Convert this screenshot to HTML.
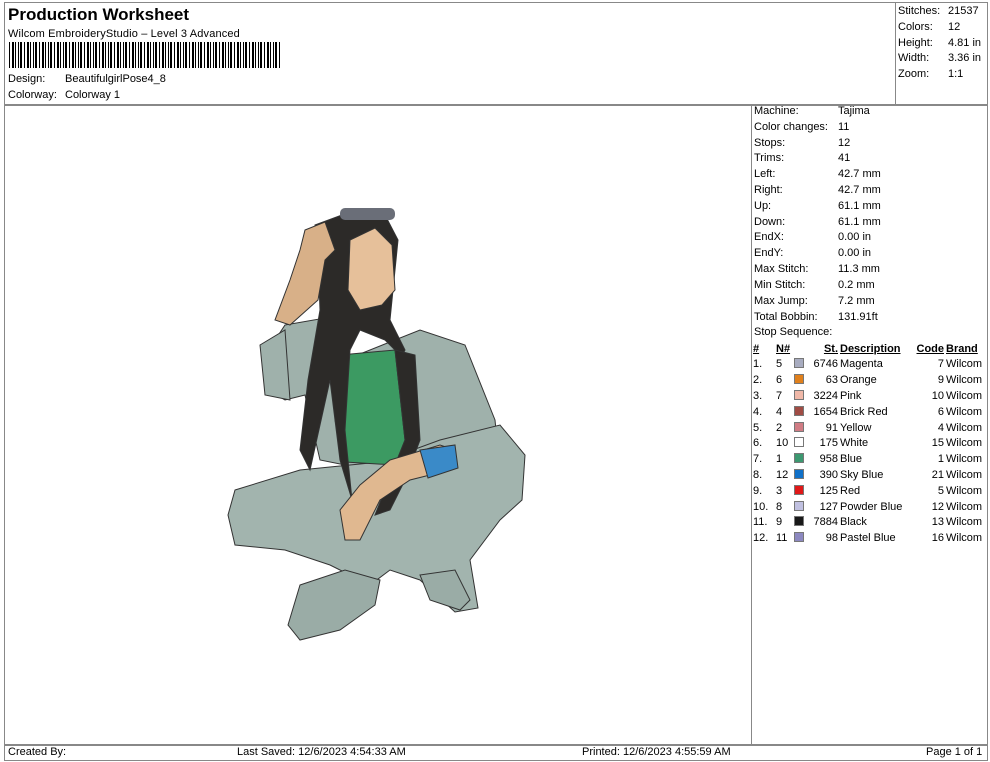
<!DOCTYPE html>
<html><head><meta charset="utf-8"><style>
*{margin:0;padding:0;box-sizing:border-box}
body{width:990px;height:762px;background:#fff;font-family:"Liberation Sans",Arial,sans-serif;font-size:11px;color:#000;position:relative;overflow:hidden}
.a{position:absolute;white-space:nowrap}
.ln{position:absolute;background:#888}
.t{position:absolute;left:754px;font-size:11px;white-space:nowrap;width:230px}
.t span{position:absolute;left:84px;white-space:nowrap}
table{position:absolute;left:752px;top:341px;border-collapse:collapse;font-size:11px;white-space:nowrap}
td{height:15.8px;padding:0 1px;line-height:15px}
th{font-weight:bold;text-decoration:underline;text-align:left;height:16px;padding:0 1px}
.r{text-align:right}
.sw{display:inline-block;width:10px;height:10px;border:1px solid #777;vertical-align:-1px}
</style></head><body>
<div class="ln" style="left:4px;top:2px;width:984px;height:1px"></div>
<div class="ln" style="left:4px;top:2px;width:1px;height:758px"></div>
<div class="ln" style="left:987px;top:2px;width:1px;height:758px"></div>
<div class="ln" style="left:895px;top:2px;width:1px;height:102px"></div>
<div class="ln" style="left:4px;top:104px;width:984px;height:2px"></div>
<div class="ln" style="left:751px;top:104px;width:1px;height:640px"></div>
<div class="ln" style="left:4px;top:744px;width:984px;height:2px"></div>
<div class="ln" style="left:4px;top:760px;width:984px;height:1px"></div>

<div class="a" style="left:8px;top:5px;font-size:17px;font-weight:bold">Production Worksheet</div>
<div class="a" style="left:8px;top:28px;letter-spacing:0.15px">Wilcom EmbroideryStudio – Level 3 Advanced</div>
<div class="a" style="left:9px;top:42px;width:273px;height:26px;background:repeating-linear-gradient(90deg,#000 0 1px,#fff 1px 3px,#000 3px 5px,#fff 5px 6px,#000 6px 7px,#fff 7px 9px,#000 9px 10px,#fff 10px 11px,#000 11px 13px,#fff 13px 15px)"></div>
<div class="a" style="left:8px;top:73px">Design:</div><div class="a" style="left:65px;top:73px">BeautifulgirlPose4_8</div>
<div class="a" style="left:8px;top:89px">Colorway:</div><div class="a" style="left:65px;top:89px">Colorway 1</div>

<div class="a" style="left:898px;top:5px">Stitches:</div><div class="a" style="left:948px;top:5px">21537</div>
<div class="a" style="left:898px;top:21px">Colors:</div><div class="a" style="left:948px;top:21px">12</div>
<div class="a" style="left:898px;top:37px">Height:</div><div class="a" style="left:948px;top:37px">4.81 in</div>
<div class="a" style="left:898px;top:52px">Width:</div><div class="a" style="left:948px;top:52px">3.36 in</div>
<div class="a" style="left:898px;top:68px">Zoom:</div><div class="a" style="left:948px;top:68px">1:1</div>

<div class="t" style="top:105px">Machine:<span>Tajima</span></div>
<div class="t" style="top:121px">Color changes:<span>11</span></div>
<div class="t" style="top:137px">Stops:<span>12</span></div>
<div class="t" style="top:152px">Trims:<span>41</span></div>
<div class="t" style="top:168px">Left:<span>42.7 mm</span></div>
<div class="t" style="top:184px">Right:<span>42.7 mm</span></div>
<div class="t" style="top:200px">Up:<span>61.1 mm</span></div>
<div class="t" style="top:216px">Down:<span>61.1 mm</span></div>
<div class="t" style="top:231px">EndX:<span>0.00 in</span></div>
<div class="t" style="top:247px">EndY:<span>0.00 in</span></div>
<div class="t" style="top:263px">Max Stitch:<span>11.3 mm</span></div>
<div class="t" style="top:279px">Min Stitch:<span>0.2 mm</span></div>
<div class="t" style="top:295px">Max Jump:<span>7.2 mm</span></div>
<div class="t" style="top:311px">Total Bobbin:<span>131.91ft</span></div>
<div class="t" style="top:326px">Stop Sequence:</div>

<table>
<tr><th style="width:23px">#</th><th style="width:18px">N#</th><th style="width:14px"></th><th style="width:32px;text-align:right">St.</th><th style="width:72px">Description</th><th style="width:34px;text-align:right">Code</th><th>Brand</th></tr>
<tr><td>1.</td><td>5</td><td><i class="sw" style="background:#a8acc0"></i></td><td class="r">6746</td><td>Magenta</td><td class="r">7</td><td>Wilcom</td></tr>
<tr><td>2.</td><td>6</td><td><i class="sw" style="background:#e0801c"></i></td><td class="r">63</td><td>Orange</td><td class="r">9</td><td>Wilcom</td></tr>
<tr><td>3.</td><td>7</td><td><i class="sw" style="background:#f0b8a8"></i></td><td class="r">3224</td><td>Pink</td><td class="r">10</td><td>Wilcom</td></tr>
<tr><td>4.</td><td>4</td><td><i class="sw" style="background:#a04c44"></i></td><td class="r">1654</td><td>Brick Red</td><td class="r">6</td><td>Wilcom</td></tr>
<tr><td>5.</td><td>2</td><td><i class="sw" style="background:#d07c84"></i></td><td class="r">91</td><td>Yellow</td><td class="r">4</td><td>Wilcom</td></tr>
<tr><td>6.</td><td>10</td><td><i class="sw" style="background:#fff"></i></td><td class="r">175</td><td>White</td><td class="r">15</td><td>Wilcom</td></tr>
<tr><td>7.</td><td>1</td><td><i class="sw" style="background:#3c9870"></i></td><td class="r">958</td><td>Blue</td><td class="r">1</td><td>Wilcom</td></tr>
<tr><td>8.</td><td>12</td><td><i class="sw" style="background:#1070c8"></i></td><td class="r">390</td><td>Sky Blue</td><td class="r">21</td><td>Wilcom</td></tr>
<tr><td>9.</td><td>3</td><td><i class="sw" style="background:#e01818"></i></td><td class="r">125</td><td>Red</td><td class="r">5</td><td>Wilcom</td></tr>
<tr><td>10.</td><td>8</td><td><i class="sw" style="background:#c0c0e0"></i></td><td class="r">127</td><td>Powder Blue</td><td class="r">12</td><td>Wilcom</td></tr>
<tr><td>11.</td><td>9</td><td><i class="sw" style="background:#181818"></i></td><td class="r">7884</td><td>Black</td><td class="r">13</td><td>Wilcom</td></tr>
<tr><td>12.</td><td>11</td><td><i class="sw" style="background:#8c88c0"></i></td><td class="r">98</td><td>Pastel Blue</td><td class="r">16</td><td>Wilcom</td></tr>
</table>

<svg class="a" style="left:0;top:0" width="750" height="744" viewBox="0 0 750 744">
<g stroke="#333" stroke-width="1">
<path d="M285 325 L325 318 L345 360 L420 330 L465 345 L495 420 L500 470 L430 480 L370 470 L320 460 L305 395 L285 400 L268 390 L262 360 Z" fill="#9fb1ab"/>
<path d="M235 490 L300 470 L380 462 L440 440 L500 425 L525 455 L522 500 L500 520 L470 560 L478 608 L455 612 L420 580 L390 570 L370 585 L330 565 L285 550 L235 545 L228 515 Z" fill="#a2b4ae"/>
<path d="M300 585 L345 570 L380 580 L375 605 L340 630 L300 640 L288 625 Z" fill="#9aaca6"/>
<path d="M420 575 L455 570 L470 600 L460 610 L430 600 Z" fill="#9aaca6"/>
<path d="M340 355 L395 350 L405 440 L395 465 L345 462 L335 420 Z" fill="#3c9a62"/>
<path d="M315 225 L350 212 L385 215 L398 240 L390 320 L405 350 L400 360 L395 350 L385 340 L360 330 L350 350 L345 430 L352 500 L340 460 L330 380 L310 470 L300 450 L308 380 L320 310 L318 260 Z" fill="#2c2a28"/>
<path d="M395 350 L415 355 L420 440 L405 480 L390 510 L375 515 L395 465 L405 440 Z" fill="#2c2a28"/>
<path d="M350 240 L375 228 L392 245 L395 290 L382 305 L360 310 L348 290 Z" fill="#e6c09a"/>
<path d="M305 230 L325 222 L335 250 L325 260 L318 300 L290 325 L275 320 L290 280 L300 250 Z" fill="#d8b088"/>
<path d="M390 460 L440 445 L455 450 L450 470 L410 480 L380 500 L360 540 L345 540 L340 510 L360 485 Z" fill="#e0b890"/>
<path d="M420 450 L455 445 L458 468 L428 478 Z" fill="#3a8ac8"/>
<path d="M260 345 L285 330 L290 400 L265 395 Z" fill="#9fb1ab"/>
</g>
<rect x="340" y="208" width="55" height="12" rx="5" fill="#6a6e78"/>
</svg>

<div class="a" style="left:8px;top:746px">Created By:</div>
<div class="a" style="left:237px;top:746px">Last Saved: 12/6/2023 4:54:33 AM</div>
<div class="a" style="left:582px;top:746px">Printed: 12/6/2023 4:55:59 AM</div>
<div class="a" style="left:926px;top:746px">Page 1 of 1</div>
</body></html>
